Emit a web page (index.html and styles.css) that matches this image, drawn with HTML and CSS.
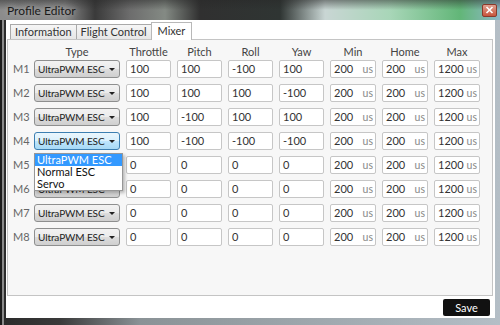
FILE: index.html
```html
<!DOCTYPE html>
<html lang="en">
<head>
    <meta charset="UTF-8">
    <title>Profile Editor</title>
    <link rel="stylesheet" href="styles.css">
</head>
<body>
    <div class="window">
        <div class="titlebar">
            <span class="title">Profile Editor</span>
            <span class="close">
                <svg width="9" height="8" viewBox="0 0 9 8"><path d="M1.5 1 L7.5 7 M7.5 1 L1.5 7" stroke="#fff" stroke-width="1.6"/></svg>
            </span>
        </div>
        <div class="client">
            <div class="tabs">
                <div class="tab">Information</div>
                <div class="tab">Flight Control</div>
                <div class="tab active">Mixer</div>
            </div>
            <div class="panel">
                <div class="mixer">
                    <div></div>
                    <div class="head">Type</div>
                    <div class="head">Throttle</div>
                    <div class="head">Pitch</div>
                    <div class="head">Roll</div>
                    <div class="head">Yaw</div>
                    <div class="head">Min</div>
                    <div class="head">Home</div>
                    <div class="head">Max</div>

                    <div class="motor">M1</div>
                    <div class="select">UltraPWM ESC<span class="arrow"></span></div>
                    <div class="field">100</div><div class="field">100</div><div class="field">-100</div><div class="field">100</div>
                    <div class="field us">200<span>us</span></div><div class="field us">200<span>us</span></div><div class="field us">1200<span>us</span></div>

                    <div class="motor">M2</div>
                    <div class="select">UltraPWM ESC<span class="arrow"></span></div>
                    <div class="field">100</div><div class="field">100</div><div class="field">100</div><div class="field">-100</div>
                    <div class="field us">200<span>us</span></div><div class="field us">200<span>us</span></div><div class="field us">1200<span>us</span></div>

                    <div class="motor">M3</div>
                    <div class="select">UltraPWM ESC<span class="arrow"></span></div>
                    <div class="field">100</div><div class="field">-100</div><div class="field">100</div><div class="field">100</div>
                    <div class="field us">200<span>us</span></div><div class="field us">200<span>us</span></div><div class="field us">1200<span>us</span></div>

                    <div class="motor">M4</div>
                    <div class="select open">UltraPWM ESC<span class="arrow"></span>
                        <ul class="dropdown">
                            <li class="picked">UltraPWM ESC</li>
                            <li>Normal ESC</li>
                            <li>Servo</li>
                        </ul>
                    </div>
                    <div class="field">100</div><div class="field">-100</div><div class="field">-100</div><div class="field">-100</div>
                    <div class="field us">200<span>us</span></div><div class="field us">200<span>us</span></div><div class="field us">1200<span>us</span></div>

                    <div class="motor">M5</div>
                    <div class="select">UltraPWM ESC<span class="arrow"></span></div>
                    <div class="field">0</div><div class="field">0</div><div class="field">0</div><div class="field">0</div>
                    <div class="field us">200<span>us</span></div><div class="field us">200<span>us</span></div><div class="field us">1200<span>us</span></div>

                    <div class="motor">M6</div>
                    <div class="select">UltraPWM ESC<span class="arrow"></span></div>
                    <div class="field">0</div><div class="field">0</div><div class="field">0</div><div class="field">0</div>
                    <div class="field us">200<span>us</span></div><div class="field us">200<span>us</span></div><div class="field us">1200<span>us</span></div>

                    <div class="motor">M7</div>
                    <div class="select">UltraPWM ESC<span class="arrow"></span></div>
                    <div class="field">0</div><div class="field">0</div><div class="field">0</div><div class="field">0</div>
                    <div class="field us">200<span>us</span></div><div class="field us">200<span>us</span></div><div class="field us">1200<span>us</span></div>

                    <div class="motor">M8</div>
                    <div class="select">UltraPWM ESC<span class="arrow"></span></div>
                    <div class="field">0</div><div class="field">0</div><div class="field">0</div><div class="field">0</div>
                    <div class="field us">200<span>us</span></div><div class="field us">200<span>us</span></div><div class="field us">1200<span>us</span></div>
                </div>
            </div>
            <div class="footer">
                <button class="save">Save</button>
            </div>
        </div>
    </div>
</body>
</html>
```

FILE: styles.css
```css
body {
    margin: 0;
    font-family: Lato, "Open Sans", sans-serif;
    font-size: 11px;
    color: #333;
}
.window {
    width: 500px;
    height: 325px;
    display: flex;
    flex-direction: column;
    box-sizing: border-box;
    padding: 0 5px 7px 6px;
    background: linear-gradient(to right, #2a2a2a 0, #3a3a3a 60px, #8a9296 140px, #b4bec6 500px);
    box-shadow: inset 2px 0 0 #1c1c1c, inset 4px 0 0 #8a8a8a;
}
.titlebar {
    height: 20px;
    margin: 0 -5px 0 -6px;
    padding: 0 3px 0 7px;
    display: flex;
    align-items: center;
    justify-content: space-between;
    background:
        linear-gradient(to bottom, rgba(40, 40, 40, 0.5) 0, rgba(40, 40, 40, 0) 10px),
        linear-gradient(to right, #8c8c8c 0, #8a8a8a 65px, #3a3a3a 95px, #6d6d6d 130px, #848a84 165px, #303030 200px, #2f3533 280px, #c9d6d4 325px, #a8d6b8 390px, #62b678 460px, #8fb8c8 500px);
}
.title {
    color: #1a1a1a;
    font-size: 12px;
    text-shadow: 0 0 6px #bbb;
}
.close {
    width: 15px;
    height: 13px;
    border-radius: 2px;
    border: 1px solid #8a3a2c;
    background: linear-gradient(to bottom, #e0a090, #c8553c);
    display: flex;
    align-items: center;
    justify-content: center;
    box-sizing: border-box;
}
.client {
    flex: 1;
    background: #fff;
    display: flex;
    flex-direction: column;
    padding: 2px 2px 0 1px;
}
.tabs {
    display: flex;
    align-items: flex-end;
    height: 17px;
    padding-left: 3px;
}
.tab {
    height: 14px;
    line-height: 14px;
    padding: 0 4px;
    border: 1px solid #a9a9a9;
    border-bottom: none;
    background: linear-gradient(to bottom, #f6f6f6, #e6e6e6);
    color: #333;
    margin-right: -1px;
    white-space: nowrap;
}
.tab.active {
    height: 17px;
    line-height: 15px;
    padding: 0 6px;
    background: #fff;
    position: relative;
    top: 1px;
    border-color: #b8b8b8;
}
.panel {
    flex: 1;
    background: #f7f7f7;
    border: 1px solid #c4c4c4;
}
.mixer {
    display: grid;
    grid-template-columns: 15px 86px 45px 45px 45px 45px 46px 46px 46px;
    grid-template-rows: 16px;
    grid-auto-rows: 24px;
    column-gap: 6px;
    padding: 4px 0 0 5px;
    white-space: nowrap;
}
.head {
    text-align: center;
    line-height: 16px;
    color: #444;
}
.motor {
    height: 18px;
    line-height: 18px;
    color: #666;
}
.select {
    position: relative;
    height: 18px;
    line-height: 16px;
    box-sizing: border-box;
    padding-left: 3px;
    border: 1px solid #8e8f8f;
    border-radius: 3px;
    background: linear-gradient(to bottom, #f2f2f2 0, #ebebeb 50%, #dddddd 51%, #cfcfcf 100%);
    color: #222;
    font-size: 10px;
    letter-spacing: -0.1px;
}
.select.open {
    border-color: #3c7fb1;
    background: linear-gradient(to bottom, #eaf6fd 0, #d9f0fc 50%, #bee6fd 51%, #a7d9f5 100%);
}
.arrow {
    position: absolute;
    right: 4px;
    top: 7px;
    border-left: 3px solid transparent;
    border-right: 3px solid transparent;
    border-top: 3px solid #222;
}
.field {
    position: relative;
    height: 18px;
    line-height: 16px;
    box-sizing: border-box;
    padding-left: 3px;
    border: 1px solid #c6c6c6;
    border-radius: 2px;
    background: #fff;
    color: #333;
}
.field.us span {
    position: absolute;
    right: 2px;
    top: 0;
    color: #888;
    font-size: 10.5px;
}
.dropdown {
    position: absolute;
    left: -1px;
    top: 20px;
    width: 87px;
    margin: 0;
    padding: 0;
    list-style: none;
    background: #fff;
    border: 1px solid #979797;
    box-shadow: 2px 2px 3px rgba(0, 0, 0, 0.25);
    z-index: 2;
    letter-spacing: 0;
}
.dropdown li {
    height: 12px;
    line-height: 12px;
    padding-left: 2px;
    color: #111;
    font-size: 11px;
}
.dropdown li.picked {
    background: #3399ff;
    color: #fff;
}
.footer {
    height: 22px;
    display: flex;
    align-items: center;
    justify-content: flex-end;
    padding-right: 3px;
}
.save {
    width: 47px;
    height: 17px;
    padding: 0;
    border: none;
    border-radius: 2px;
    background: #111;
    color: #fff;
    font-family: Lato, "Open Sans", sans-serif;
    font-size: 11px;
}
```
